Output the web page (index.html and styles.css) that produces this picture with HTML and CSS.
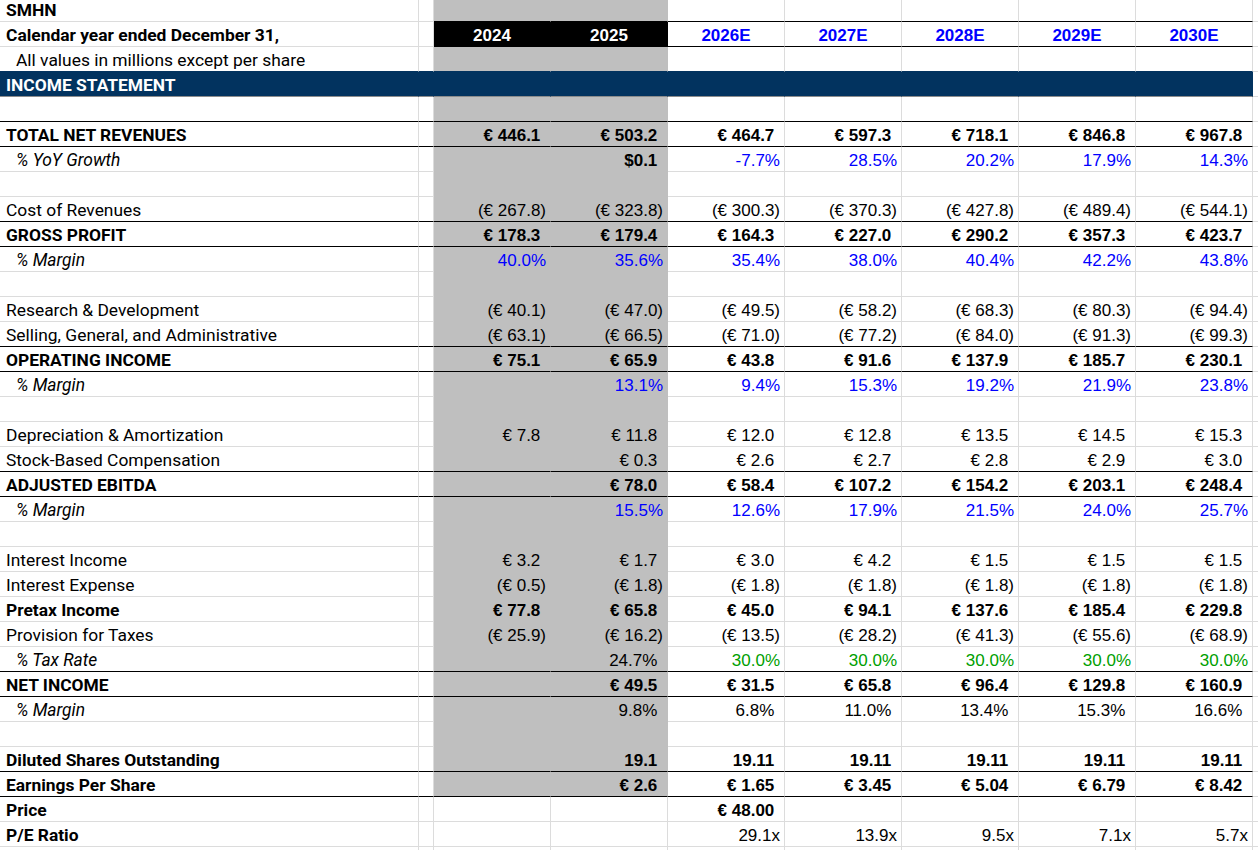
FILE: index.html
```html
<!DOCTYPE html>
<html lang="en">
<head>
<meta charset="utf-8">
<title>SMHN Income Statement</title>
<link rel="stylesheet" href="styles.css">
</head>
<body>
<div class="sheet">
  <div class="row top">
    <div class="lbl b">SMHN</div><div class="sp"></div>
    <div class="h"></div><div class="h"></div>
    <div class="e"></div><div class="e"></div><div class="e"></div><div class="e"></div><div class="e"></div>
    <div class="fill"></div>
  </div>
  <div class="row head">
    <div class="lbl b">Calendar year ended December 31,</div><div class="sp"></div>
    <div class="h">2024</div><div class="h">2025</div>
    <div class="e">2026E</div><div class="e">2027E</div><div class="e">2028E</div><div class="e">2029E</div><div class="e">2030E</div>
    <div class="fill"></div>
  </div>
  <div class="row pre-band">
    <div class="lbl ind">All values in millions except per share</div><div class="sp"></div>
    <div class="h"></div><div class="h"></div>
    <div class="e"></div><div class="e"></div><div class="e"></div><div class="e"></div><div class="e"></div>
    <div class="fill"></div>
  </div>
  <div class="row band">
    <div class="lbl b">INCOME STATEMENT</div><div class="sp"></div>
    <div class="h"></div><div class="h"></div>
    <div class="e"></div><div class="e"></div><div class="e"></div><div class="e"></div><div class="e"></div>
    <div class="fill"></div>
  </div>
  <div class="row rule">
    <div class="lbl"></div><div class="sp"></div>
    <div class="h"></div><div class="h"></div>
    <div class="e"></div><div class="e"></div><div class="e"></div><div class="e"></div><div class="e"></div>
    <div class="fill"></div>
  </div>
  <div class="row rule tot">
    <div class="lbl">TOTAL NET REVENUES</div><div class="sp"></div>
    <div class="h n p">€ 446.1</div><div class="h n p">€ 503.2</div>
    <div class="e n p">€ 464.7</div><div class="e n p">€ 597.3</div><div class="e n p">€ 718.1</div><div class="e n p">€ 846.8</div><div class="e n p">€ 967.8</div>
    <div class="fill"></div>
  </div>
  <div class="row">
    <div class="lbl ind i">% YoY Growth</div><div class="sp"></div>
    <div class="h n"></div><div class="h n p b">$0.1</div>
    <div class="e n blue">-7.7%</div><div class="e n blue">28.5%</div><div class="e n blue">20.2%</div><div class="e n blue">17.9%</div><div class="e n blue">14.3%</div>
    <div class="fill"></div>
  </div>
  <div class="row">
    <div class="lbl"></div><div class="sp"></div>
    <div class="h"></div><div class="h"></div>
    <div class="e"></div><div class="e"></div><div class="e"></div><div class="e"></div><div class="e"></div>
    <div class="fill"></div>
  </div>
  <div class="row rule">
    <div class="lbl">Cost of Revenues</div><div class="sp"></div>
    <div class="h n">(€ 267.8)</div><div class="h n">(€ 323.8)</div>
    <div class="e n">(€ 300.3)</div><div class="e n">(€ 370.3)</div><div class="e n">(€ 427.8)</div><div class="e n">(€ 489.4)</div><div class="e n">(€ 544.1)</div>
    <div class="fill"></div>
  </div>
  <div class="row rule tot">
    <div class="lbl">GROSS PROFIT</div><div class="sp"></div>
    <div class="h n p">€ 178.3</div><div class="h n p">€ 179.4</div>
    <div class="e n p">€ 164.3</div><div class="e n p">€ 227.0</div><div class="e n p">€ 290.2</div><div class="e n p">€ 357.3</div><div class="e n p">€ 423.7</div>
    <div class="fill"></div>
  </div>
  <div class="row">
    <div class="lbl ind i">% Margin</div><div class="sp"></div>
    <div class="h n blue">40.0%</div><div class="h n blue">35.6%</div>
    <div class="e n blue">35.4%</div><div class="e n blue">38.0%</div><div class="e n blue">40.4%</div><div class="e n blue">42.2%</div><div class="e n blue">43.8%</div>
    <div class="fill"></div>
  </div>
  <div class="row">
    <div class="lbl"></div><div class="sp"></div>
    <div class="h"></div><div class="h"></div>
    <div class="e"></div><div class="e"></div><div class="e"></div><div class="e"></div><div class="e"></div>
    <div class="fill"></div>
  </div>
  <div class="row">
    <div class="lbl">Research &amp; Development</div><div class="sp"></div>
    <div class="h n">(€ 40.1)</div><div class="h n">(€ 47.0)</div>
    <div class="e n">(€ 49.5)</div><div class="e n">(€ 58.2)</div><div class="e n">(€ 68.3)</div><div class="e n">(€ 80.3)</div><div class="e n">(€ 94.4)</div>
    <div class="fill"></div>
  </div>
  <div class="row rule">
    <div class="lbl">Selling, General, and Administrative</div><div class="sp"></div>
    <div class="h n">(€ 63.1)</div><div class="h n">(€ 66.5)</div>
    <div class="e n">(€ 71.0)</div><div class="e n">(€ 77.2)</div><div class="e n">(€ 84.0)</div><div class="e n">(€ 91.3)</div><div class="e n">(€ 99.3)</div>
    <div class="fill"></div>
  </div>
  <div class="row rule tot">
    <div class="lbl">OPERATING INCOME</div><div class="sp"></div>
    <div class="h n p">€ 75.1</div><div class="h n p">€ 65.9</div>
    <div class="e n p">€ 43.8</div><div class="e n p">€ 91.6</div><div class="e n p">€ 137.9</div><div class="e n p">€ 185.7</div><div class="e n p">€ 230.1</div>
    <div class="fill"></div>
  </div>
  <div class="row">
    <div class="lbl ind i">% Margin</div><div class="sp"></div>
    <div class="h n"></div><div class="h n blue">13.1%</div>
    <div class="e n blue">9.4%</div><div class="e n blue">15.3%</div><div class="e n blue">19.2%</div><div class="e n blue">21.9%</div><div class="e n blue">23.8%</div>
    <div class="fill"></div>
  </div>
  <div class="row">
    <div class="lbl"></div><div class="sp"></div>
    <div class="h"></div><div class="h"></div>
    <div class="e"></div><div class="e"></div><div class="e"></div><div class="e"></div><div class="e"></div>
    <div class="fill"></div>
  </div>
  <div class="row">
    <div class="lbl">Depreciation &amp; Amortization</div><div class="sp"></div>
    <div class="h n p">€ 7.8</div><div class="h n p">€ 11.8</div>
    <div class="e n p">€ 12.0</div><div class="e n p">€ 12.8</div><div class="e n p">€ 13.5</div><div class="e n p">€ 14.5</div><div class="e n p">€ 15.3</div>
    <div class="fill"></div>
  </div>
  <div class="row rule">
    <div class="lbl">Stock-Based Compensation</div><div class="sp"></div>
    <div class="h n"></div><div class="h n p">€ 0.3</div>
    <div class="e n p">€ 2.6</div><div class="e n p">€ 2.7</div><div class="e n p">€ 2.8</div><div class="e n p">€ 2.9</div><div class="e n p">€ 3.0</div>
    <div class="fill"></div>
  </div>
  <div class="row rule tot">
    <div class="lbl">ADJUSTED EBITDA</div><div class="sp"></div>
    <div class="h n"></div><div class="h n p">€ 78.0</div>
    <div class="e n p">€ 58.4</div><div class="e n p">€ 107.2</div><div class="e n p">€ 154.2</div><div class="e n p">€ 203.1</div><div class="e n p">€ 248.4</div>
    <div class="fill"></div>
  </div>
  <div class="row">
    <div class="lbl ind i">% Margin</div><div class="sp"></div>
    <div class="h n"></div><div class="h n blue">15.5%</div>
    <div class="e n blue">12.6%</div><div class="e n blue">17.9%</div><div class="e n blue">21.5%</div><div class="e n blue">24.0%</div><div class="e n blue">25.7%</div>
    <div class="fill"></div>
  </div>
  <div class="row">
    <div class="lbl"></div><div class="sp"></div>
    <div class="h"></div><div class="h"></div>
    <div class="e"></div><div class="e"></div><div class="e"></div><div class="e"></div><div class="e"></div>
    <div class="fill"></div>
  </div>
  <div class="row">
    <div class="lbl">Interest Income</div><div class="sp"></div>
    <div class="h n p">€ 3.2</div><div class="h n p">€ 1.7</div>
    <div class="e n p">€ 3.0</div><div class="e n p">€ 4.2</div><div class="e n p">€ 1.5</div><div class="e n p">€ 1.5</div><div class="e n p">€ 1.5</div>
    <div class="fill"></div>
  </div>
  <div class="row">
    <div class="lbl">Interest Expense</div><div class="sp"></div>
    <div class="h n">(€ 0.5)</div><div class="h n">(€ 1.8)</div>
    <div class="e n">(€ 1.8)</div><div class="e n">(€ 1.8)</div><div class="e n">(€ 1.8)</div><div class="e n">(€ 1.8)</div><div class="e n">(€ 1.8)</div>
    <div class="fill"></div>
  </div>
  <div class="row tot">
    <div class="lbl">Pretax Income</div><div class="sp"></div>
    <div class="h n p">€ 77.8</div><div class="h n p">€ 65.8</div>
    <div class="e n p">€ 45.0</div><div class="e n p">€ 94.1</div><div class="e n p">€ 137.6</div><div class="e n p">€ 185.4</div><div class="e n p">€ 229.8</div>
    <div class="fill"></div>
  </div>
  <div class="row">
    <div class="lbl">Provision for Taxes</div><div class="sp"></div>
    <div class="h n">(€ 25.9)</div><div class="h n">(€ 16.2)</div>
    <div class="e n">(€ 13.5)</div><div class="e n">(€ 28.2)</div><div class="e n">(€ 41.3)</div><div class="e n">(€ 55.6)</div><div class="e n">(€ 68.9)</div>
    <div class="fill"></div>
  </div>
  <div class="row rule">
    <div class="lbl ind i">% Tax Rate</div><div class="sp"></div>
    <div class="h n"></div><div class="h n p">24.7%</div>
    <div class="e n green">30.0%</div><div class="e n green">30.0%</div><div class="e n green">30.0%</div><div class="e n green">30.0%</div><div class="e n green">30.0%</div>
    <div class="fill"></div>
  </div>
  <div class="row rule tot">
    <div class="lbl">NET INCOME</div><div class="sp"></div>
    <div class="h n"></div><div class="h n p">€ 49.5</div>
    <div class="e n p">€ 31.5</div><div class="e n p">€ 65.8</div><div class="e n p">€ 96.4</div><div class="e n p">€ 129.8</div><div class="e n p">€ 160.9</div>
    <div class="fill"></div>
  </div>
  <div class="row">
    <div class="lbl ind i">% Margin</div><div class="sp"></div>
    <div class="h n"></div><div class="h n p">9.8%</div>
    <div class="e n p">6.8%</div><div class="e n p">11.0%</div><div class="e n p">13.4%</div><div class="e n p">15.3%</div><div class="e n p">16.6%</div>
    <div class="fill"></div>
  </div>
  <div class="row">
    <div class="lbl"></div><div class="sp"></div>
    <div class="h"></div><div class="h"></div>
    <div class="e"></div><div class="e"></div><div class="e"></div><div class="e"></div><div class="e"></div>
    <div class="fill"></div>
  </div>
  <div class="row rule tot">
    <div class="lbl">Diluted Shares Outstanding</div><div class="sp"></div>
    <div class="h n"></div><div class="h n p">19.1</div>
    <div class="e n p">19.11</div><div class="e n p">19.11</div><div class="e n p">19.11</div><div class="e n p">19.11</div><div class="e n p">19.11</div>
    <div class="fill"></div>
  </div>
  <div class="row rule tot">
    <div class="lbl">Earnings Per Share</div><div class="sp"></div>
    <div class="h n"></div><div class="h n p">€ 2.6</div>
    <div class="e n p">€ 1.65</div><div class="e n p">€ 3.45</div><div class="e n p">€ 5.04</div><div class="e n p">€ 6.79</div><div class="e n p">€ 8.42</div>
    <div class="fill"></div>
  </div>
  <div class="row tot tail">
    <div class="lbl">Price</div><div class="sp"></div>
    <div class="w"></div><div class="w"></div>
    <div class="e n p">€ 48.00</div><div class="e"></div><div class="e"></div><div class="e"></div><div class="e"></div>
    <div class="fill"></div>
  </div>
  <div class="row tail">
    <div class="lbl b">P/E Ratio</div><div class="sp"></div>
    <div class="w"></div><div class="w"></div>
    <div class="e n">29.1x</div><div class="e n">13.9x</div><div class="e n">9.5x</div><div class="e n">7.1x</div><div class="e n">5.7x</div>
    <div class="fill"></div>
  </div>
  <div class="row">
    <div class="lbl"></div><div class="sp"></div>
    <div class="w"></div><div class="w"></div>
    <div class="e"></div><div class="e"></div><div class="e"></div><div class="e"></div><div class="e"></div>
    <div class="fill"></div>
  </div>
</div>
</body>
</html>
```

FILE: styles.css
```css
html, body {
  margin: 0;
  padding: 0;
  background: #ffffff;
  overflow: hidden;
}

body {
  font-family: Roboto, "Liberation Sans", Arial, sans-serif;
  font-size: 17px;
  color: #000000;
}

.sheet {
  margin-top: -3px;
}

.row {
  display: grid;
  grid-template-columns: 419px 15px 117px 117px 117px 117px 117px 117px 117px 1fr;
  height: 25px;
}

.row > div {
  box-sizing: border-box;
  height: 25px;
  padding: 3px 4px 0 4px;
  line-height: 21px;
  white-space: nowrap;
  overflow: hidden;
  border-right: 1px solid #dcdcdc;
  border-bottom: 1px solid #dcdcdc;
}

/* label column */
.lbl {
  padding-left: 6px !important;
  font-family: Roboto, "Liberation Sans", Arial, sans-serif;
  font-size: 17.4px;
}
.lbl.ind {
  padding-left: 16px !important;
}
.b, .tot > div {
  font-weight: 700;
}
.i {
  font-style: italic;
}

/* historical (shaded) columns */
.h {
  background: #bfbfbf;
  border-right-color: #bfbfbf !important;
  border-bottom-color: #bfbfbf !important;
}

/* numbers */
.n {
  text-align: right;
  font-family: "Liberation Sans", Arial, sans-serif;
}
.p::after {
  content: ")";
  visibility: hidden;
}
.blue {
  color: #0000ff;
}
.green {
  color: #00a000;
}

/* top row: black rule under header */
.top .e {
  border-bottom-color: #000000;
}
.top .h {
  border-bottom-color: #000000 !important;
}

/* header row with years */
.head .h,
.head .e {
  text-align: center;
  font-weight: 700;
  font-family: "Liberation Sans", Arial, sans-serif;
}
.head .h {
  background: #000000;
  color: #ffffff;
  border-right-color: #000000 !important;
  border-bottom-color: #000000 !important;
}
.head .e {
  color: #0000ff;
  border-bottom-color: #000000;
}

/* navy band */
.pre-band > div:not(.fill) {
  border-bottom-color: #02335f !important;
}
.band > div:not(.fill) {
  background: #02335f;
  color: #ffffff;
  border-right-color: #02335f !important;
  border-bottom-color: #8c8c8c !important;
}

/* black horizontal rules */
.rule > div:not(.fill) {
  border-bottom-color: #000000 !important;
}

/* unshaded tail cells in historical columns */
.w {
  background: #ffffff;
}
```
